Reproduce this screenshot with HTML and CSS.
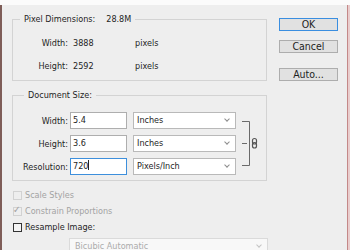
FILE: index.html
```html
<!DOCTYPE html>
<html lang="en">
<head>
    <meta charset="UTF-8">
    <title>Image Size</title>
    <link rel="stylesheet" href="styles.css">
</head>
<body>
    <div class="topbar"></div>
    <div class="window">
        <div class="edge-left"></div>
        <div class="dialog">
            <div class="main">
                <fieldset class="group pixel-dims">
                    <legend>Pixel Dimensions:<span class="size">28.8M</span></legend>
                    <div class="dims-grid">
                        <span class="lbl">Width:</span><span class="val">3888</span><span class="unit">pixels</span>
                        <span class="lbl">Height:</span><span class="val">2592</span><span class="unit">pixels</span>
                    </div>
                </fieldset>

                <fieldset class="group doc-size">
                    <legend>Document Size:</legend>
                    <div class="doc-grid">
                        <span class="lbl">Width:</span>
                        <div class="field">5.4</div>
                        <div class="select">Inches<span class="chev"></span></div>
                        <svg class="link" width="16" height="63" viewBox="0 0 16 63">
                            <path d="M0 9.5 H7.5 V53.5 H0 M0 31.5 H5" fill="none" stroke="#6a6a6a" stroke-width="1"/>
                            <rect x="10.5" y="26.5" width="4" height="5.5" rx="2" fill="none" stroke="#555" stroke-width="1.2"/>
                            <rect x="10.5" y="30.5" width="4" height="5.5" rx="2" fill="none" stroke="#555" stroke-width="1.2"/>
                        </svg>
                        <span class="lbl">Height:</span>
                        <div class="field">3.6</div>
                        <div class="select">Inches<span class="chev"></span></div>
                        <span class="lbl">Resolution:</span>
                        <div class="field focused">720<span class="caret"></span></div>
                        <div class="select">Pixels/Inch<span class="chev"></span></div>
                    </div>
                </fieldset>

                <div class="checks">
                    <div class="check disabled"><span class="box"></span>Scale Styles</div>
                    <div class="check disabled"><span class="box"><span class="tick">&#10003;</span></span>Constrain Proportions</div>
                    <div class="check"><span class="box"></span>Resample Image:</div>
                </div>
                <div class="select wide disabled">Bicubic Automatic<span class="chev"></span></div>
            </div>

            <div class="buttons">
                <button class="btn default">OK</button>
                <button class="btn">Cancel</button>
                <button class="btn auto">Auto...</button>
            </div>
        </div>
        <div class="edge-right"></div>
    </div>
</body>
</html>
```

FILE: styles.css
```css
body {
    margin: 0;
    background-color: #fbfbfb;
    font-family: "DejaVu Sans Condensed", "Liberation Sans", sans-serif;
    font-size: 9px;
    color: #1e1e1e;
    overflow: hidden;
}

.topbar {
    height: 5px;
    background-color: #fbfbfb;
}

.window {
    display: flex;
    height: 245px;
}

.edge-left {
    width: 2px;
    background-color: #7e5d58;
}

.edge-right {
    width: 3px;
    border-left: 1px solid #c48888;
    background-color: #e9cdcd;
    box-sizing: border-box;
}

.dialog {
    flex: 1;
    display: flex;
    background-color: #eeeeee;
}

.main {
    padding: 8px 0 0 10px;
    width: 255px;
}

.group {
    margin: 0;
    padding: 0 0 8px 0;
    border: 1px solid #d3d3d3;
    min-width: 0;
}

.group legend {
    margin-left: 7px;
    padding: 0 4px;
    line-height: 12px;
}

.size {
    margin-left: 11px;
}

.dims-grid {
    display: grid;
    grid-template-columns: 55px 57px auto;
    column-gap: 5px;
    row-gap: 11px;
    padding-top: 12px;
    line-height: 12px;
}

.lbl {
    text-align: right;
}

.doc-size {
    margin-top: 8px;
    padding-bottom: 5px;
}

.doc-size legend {
    margin-left: 11px;
}

.doc-grid {
    display: grid;
    grid-template-columns: 55px 57px 107px 20px;
    grid-template-rows: 17px 17px 17px;
    column-gap: 2px;
    row-gap: 6px;
    padding-top: 11px;
    align-items: center;
}

.doc-grid .select,
.doc-grid .link {
    margin-left: 4px;
}

.field {
    height: 17px;
    box-sizing: border-box;
    border: 1px solid #aeaeae;
    background-color: #fff;
    padding-left: 2px;
    line-height: 15px;
}

.field.focused {
    border-color: #3d8fdc;
}

.caret {
    display: inline-block;
    width: 1px;
    height: 10px;
    background-color: #222;
    vertical-align: -1px;
}

.select {
    position: relative;
    height: 17px;
    box-sizing: border-box;
    border: 1px solid #b9b9b9;
    background-color: #fff;
    padding-left: 3px;
    line-height: 15px;
}

.chev {
    position: absolute;
    right: 6px;
    top: 4px;
    width: 3px;
    height: 3px;
    border-right: 1px solid #8c8c8c;
    border-bottom: 1px solid #8c8c8c;
    transform: rotate(45deg);
}

.link {
    grid-column: 4;
    grid-row: 1 / span 3;
}

.checks {
    margin-top: 6px;
}

.check {
    display: flex;
    align-items: center;
    height: 16px;
}

.box {
    position: relative;
    width: 9px;
    height: 9px;
    box-sizing: border-box;
    margin: 0 3px 0 1px;
    border: 1px solid #333;
    background-color: #f4f4f4;
}

.check.disabled {
    color: #a3a3a3;
}

.check.disabled .box {
    border-color: #d2d2d2;
    background-color: #eeeeee;
}

.tick {
    position: absolute;
    left: -1px;
    top: -4px;
    font-size: 10px;
    color: #a0a0a0;
}

.select.wide {
    margin: 3px 0 0 57px;
    width: 199px;
}

.select.disabled {
    background-color: #f8f8f8;
    border-color: #dadada;
    color: #ababab;
    padding-left: 5px;
}

.select.disabled .chev {
    border-color: #c4c4c4;
}

.buttons {
    display: flex;
    flex-direction: column;
    margin-left: 12px;
    padding-top: 13px;
}

.btn {
    width: 59px;
    height: 13px;
    padding: 0;
    font-family: inherit;
    font-size: 10.5px;
    line-height: 11px;
    color: #1e1e1e;
    background-color: #e1e1e1;
    border: 1px solid #adadad;
}

.btn.default {
    border-color: #3a8ee0;
}

.btn + .btn {
    margin-top: 9px;
}

.btn.auto {
    margin-top: 15px;
}
```
